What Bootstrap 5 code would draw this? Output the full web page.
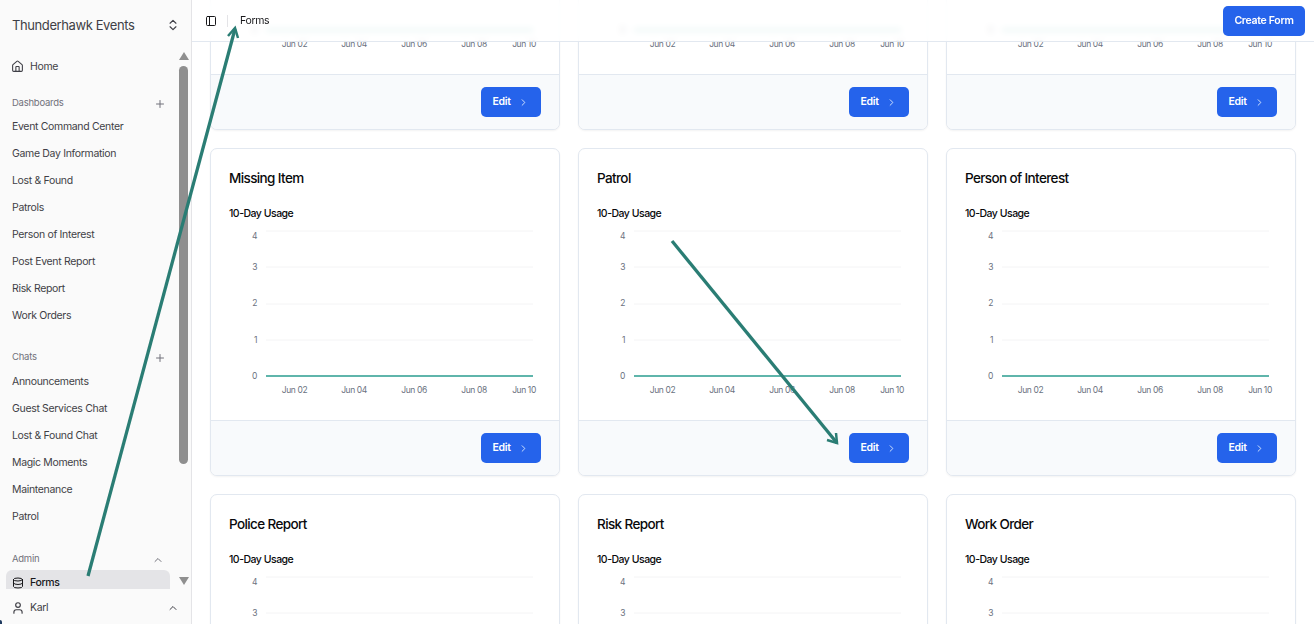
<!doctype html>
<html lang="en"><head><meta charset="utf-8"><title>Forms</title>
<link href="https://cdn.jsdelivr.net/npm/bootstrap@5.3.0/dist/css/bootstrap.min.css" rel="stylesheet">
<style>
html,body{height:100%;overflow:hidden}
body{font-family:Inter,"Liberation Sans",sans-serif;font-size:10.5px;letter-spacing:-.33px;color:#18181b;background:#fff}
.shell{height:624px;position:relative}
.shell::after{content:"";position:absolute;left:0;bottom:0;width:2px;height:4px;background:#1e3a5f;border-top-right-radius:2px;z-index:6}
.side{width:192px;background:#fafafa;border-right:1px solid #e4e4e7;flex:none}
.brand{height:50px;padding:1px 12px 0;font-size:13px;letter-spacing:-.4px;color:#3f3f46}
.brand .ic{width:14px;height:14px;margin-right:-1px}
.navlist{padding:5px 6px 0;overflow:hidden;min-height:0}
.itm{height:24px;margin-bottom:3px;padding:0 6px;border-radius:6px;color:#3f3f46;text-decoration:none;flex:none;gap:6px}
.itm.on{background:#e4e4e7;color:#18181b;font-weight:500;margin-bottom:0;height:25px;padding-top:1px}
.itm .hm{width:13px;height:13px;margin-left:-1px}
.grp{height:20px;padding:0 6px;font-size:9.5px;letter-spacing:-.25px;color:#71717a;flex:none;margin-bottom:1px}
.grp .pl{margin-right:-2px}
.g1{margin-top:12px}.g2{margin-top:17px;margin-bottom:2px}.g3{margin-top:18px;margin-bottom:0}
.ic{width:12px;height:12px;fill:none;stroke:currentColor;stroke-width:2;stroke-linecap:round;stroke-linejoin:round;flex:none}
.sb{width:15px;flex:none}
.sb i{display:block;width:0;height:0;border-left:5px solid transparent;border-right:5px solid transparent;margin:2px auto 3px}
.sb .up{border-bottom:8px solid #8f8f8f}
.sb .dn{border-top:8px solid #8f8f8f;margin-top:auto;margin-bottom:4px}
.thumb{width:9px;height:398px;background:#8f8f8f;border-radius:5px;margin:3px auto 0}
.foot{height:35px;padding:2px 12px 0 11px;color:#3f3f46;gap:5px;flex:none}
.foot .us{width:14px;height:14px}
.pane{min-width:0;overflow:hidden;position:relative}
.bar{position:absolute;top:0;left:0;right:0;height:42px;z-index:2;background:rgba(255,255,255,.8);backdrop-filter:blur(3px);border-bottom:1px solid #e2e8f0;padding:0 9px 0 13px}
.bar .ic{color:#18181b}
.sep{width:1px;height:12px;background:#e4e4e7;margin:0 12px 0 10px}
.btn-main{background:#2563eb;border:0;color:#fff;font-size:10.5px;font-weight:600;letter-spacing:-.3px;border-radius:5px;height:30px;line-height:30px;padding:0}
.btn-main:hover{background:#2563eb;color:#fff}
.mk{width:82px}
.ed{width:60px;gap:7px}
.ed .ic{width:11px;height:11px;stroke:#dbeafe;margin-right:1px}
.gridz{display:grid;grid-template-columns:repeat(3,350px);gap:18px;padding:0 18px;margin-top:-198px}
.fc{height:328px;border:1px solid #e2e8f0;border-radius:7px;box-shadow:0 1px 2px rgba(0,0,0,.05);overflow:hidden;background:#fff}
.fb{height:271px;padding:18px 18px 0}
.ft{font-size:13.5px;font-weight:500;line-height:22px;color:#09090b;letter-spacing:-.62px}
.fu{font-size:10.5px;font-weight:500;line-height:14px;margin-top:18px;color:#09090b;letter-spacing:-.5px}
.cv{display:block;width:312px;height:180px;margin-top:5px}
.cv text{font:8.5px Inter,"Liberation Sans",sans-serif;letter-spacing:-.4px;fill:#6b7280}
.ff{height:55px;background:#f8fafc;border-top:1px solid #e2e8f0;padding:0 18px}
.over{position:absolute;inset:0;z-index:5;pointer-events:none}
</style></head><body>
<div class="shell d-flex">
 <aside class="side d-flex flex-column">
  <div class="brand d-flex align-items-center justify-content-between"><span>Thunderhawk Events</span>
   <svg class="ic" viewBox="0 0 24 24"><path d="m7 15 5 5 5-5"/><path d="m7 9 5-5 5 5"/></svg></div>
  <div class="d-flex flex-grow-1" style="min-height:0">
   <nav class="navlist d-flex flex-column flex-grow-1">
    <a class="itm d-flex align-items-center" href="#"><svg class="ic hm" viewBox="0 0 24 24"><path d="M15 21v-8a1 1 0 0 0-1-1h-4a1 1 0 0 0-1 1v8"/><path d="M3 10a2 2 0 0 1 .7-1.5l7-6a2 2 0 0 1 2.6 0l7 6a2 2 0 0 1 .7 1.5v9a2 2 0 0 1-2 2H5a2 2 0 0 1-2-2z"/></svg>Home</a>
    <div class="grp g1 d-flex align-items-center justify-content-between"><span>Dashboards</span><svg class="ic pl" viewBox="0 0 24 24" style="color:#71717a"><path d="M5 12h14M12 5v14"/></svg></div>
    <a class="itm d-flex align-items-center" href="#">Event Command Center</a>
    <a class="itm d-flex align-items-center" href="#">Game Day Information</a>
    <a class="itm d-flex align-items-center" href="#">Lost &amp; Found</a>
    <a class="itm d-flex align-items-center" href="#">Patrols</a>
    <a class="itm d-flex align-items-center" href="#">Person of Interest</a>
    <a class="itm d-flex align-items-center" href="#">Post Event Report</a>
    <a class="itm d-flex align-items-center" href="#">Risk Report</a>
    <a class="itm d-flex align-items-center" href="#">Work Orders</a>
    <div class="grp g2 d-flex align-items-center justify-content-between"><span>Chats</span><svg class="ic pl" viewBox="0 0 24 24" style="color:#71717a"><path d="M5 12h14M12 5v14"/></svg></div>
    <a class="itm d-flex align-items-center" href="#">Announcements</a>
    <a class="itm d-flex align-items-center" href="#">Guest Services Chat</a>
    <a class="itm d-flex align-items-center" href="#">Lost &amp; Found Chat</a>
    <a class="itm d-flex align-items-center" href="#">Magic Moments</a>
    <a class="itm d-flex align-items-center" href="#">Maintenance</a>
    <a class="itm d-flex align-items-center" href="#">Patrol</a>
    <div class="grp g3 d-flex align-items-center justify-content-between"><span>Admin</span><svg class="ic" viewBox="0 0 24 24" style="color:#71717a"><path d="m18 15-6-6-6 6"/></svg></div>
    <a class="itm on d-flex align-items-center" href="#"><svg class="ic" viewBox="0 0 24 24"><ellipse cx="12" cy="5" rx="9" ry="3"/><path d="M3 5v14a9 3 0 0 0 18 0V5"/><path d="M3 12a9 3 0 0 0 18 0"/></svg>Forms</a>
   </nav>
   <div class="sb d-flex flex-column"><i class="up"></i><div class="thumb"></div><i class="dn"></i></div>
  </div>
  <div class="foot d-flex align-items-center"><svg class="ic us" viewBox="0 0 24 24"><path d="M19 21v-2a4 4 0 0 0-4-4H9a4 4 0 0 0-4 4v2"/><circle cx="12" cy="7" r="4"/></svg><span class="flex-grow-1">Karl</span><svg class="ic" viewBox="0 0 24 24"><path d="m18 15-6-6-6 6"/></svg></div>
 </aside>
 <main class="pane flex-grow-1">
  <header class="bar d-flex align-items-center">
   <svg class="ic" viewBox="0 0 24 24"><rect x="3" y="3" width="18" height="18" rx="2"/><path d="M9 3v18"/></svg>
   <span class="sep"></span><span>Forms</span>
   <a href="#" class="btn btn-main mk ms-auto">Create Form</a>
  </header>
  <div class="gridz" id="gz"></div>
 </main>
 <svg class="over" viewBox="0 0 1314 624" width="1314" height="624" fill="none" stroke="#2a7d74" stroke-width="3.3">
  <path d="M88 576 235 29"/><path d="m228 36 7-8 3 10" stroke-width="2.5"/>
  <path d="M672 241 837 443"/><path d="m827 440 10 3-1-10" stroke-width="2.5"/>
 </svg>
</div>
<script>
var names=["Incident","Lost Item","Maintenance","Missing Item","Patrol","Person of Interest","Police Report","Risk Report","Work Order"];
var ys=[5,41,78,114,150],dy=[7.5,3,2,3,3],xs=[["Jun 02",65.5],["Jun 04",125],["Jun 06",185],["Jun 08",245],["Jun 10",295]];
document.getElementById('gz').innerHTML=names.map(function(n){
 var g=ys.map(function(y,i){return '<line x1="37" x2="304" y1="'+y+'" y2="'+y+'" stroke="'+(i==4?'#2a9d8f':'#f4f4f5')+'" stroke-width="'+(i==4?1.6:1)+'"/><text x="28" y="'+(y+dy[i])+'" text-anchor="end">'+(4-i)+'</text>'}).join('');
 var t=xs.map(function(x){return '<text x="'+x[1]+'" y="167" text-anchor="middle">'+x[0]+'</text>'}).join('');
 return '<article class="fc"><div class="fb"><div class="ft">'+n+'</div><div class="fu">10-Day Usage</div><svg class="cv" viewBox="0 0 312 180">'+g+t+'</svg></div><div class="ff d-flex align-items-center justify-content-end"><a href="#" class="btn btn-main ed d-flex align-items-center justify-content-center">Edit<svg class="ic" viewBox="0 0 24 24"><path d="m9 18 6-6-6-6"/></svg></a></div></article>';
}).join('');
</script>
<script src="https://cdn.jsdelivr.net/npm/bootstrap@5.3.0/dist/js/bootstrap.bundle.min.js"></script>
</body></html>
